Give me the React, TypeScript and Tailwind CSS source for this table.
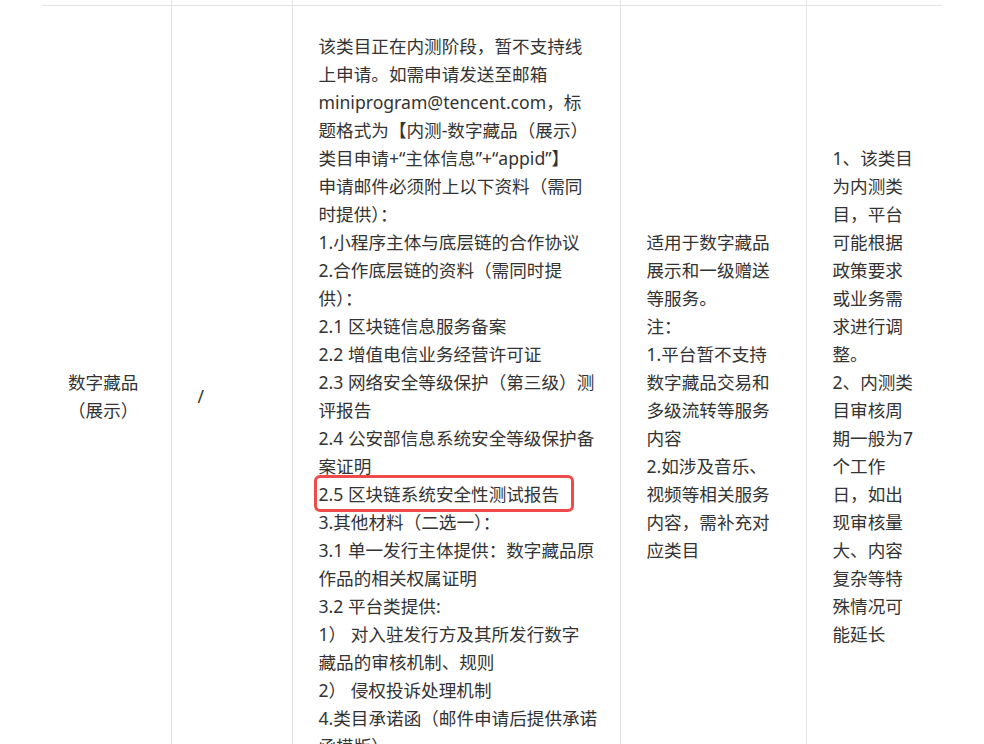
const requirements = [
  '该类目正在内测阶段，暂不支持线',
  '上申请。如需申请发送至邮箱',
  'miniprogram@tencent.com，标',
  '题格式为【内测-数字藏品（展示）',
  '类目申请+“主体信息”+“appid”】',
  '申请邮件必须附上以下资料（需同',
  '时提供）：',
  '1.小程序主体与底层链的合作协议',
  '2.合作底层链的资料（需同时提',
  '供）：',
  '2.1 区块链信息服务备案',
  '2.2 增值电信业务经营许可证',
  '2.3 网络安全等级保护（第三级）测',
  '评报告',
  '2.4 公安部信息系统安全等级保护备',
  '案证明',
  '2.5 区块链系统安全性测试报告',
  '3.其他材料（二选一）：',
  '3.1 单一发行主体提供：数字藏品原',
  '作品的相关权属证明',
  '3.2 平台类提供:',
  '1） 对入驻发行方及其所发行数字',
  '藏品的审核机制、规则',
  '2） 侵权投诉处理机制',
  '4.类目承诺函（邮件申请后提供承诺',
  '函模版）',
]

const scope = [
  '适用于数字藏品',
  '展示和一级赠送',
  '等服务。',
  '注：',
  '1.平台暂不支持',
  '数字藏品交易和',
  '多级流转等服务',
  '内容',
  '2.如涉及音乐、',
  '视频等相关服务',
  '内容，需补充对',
  '应类目',
]

const notes = [
  '1、该类目',
  '为内测类',
  '目，平台',
  '可能根据',
  '政策要求',
  '或业务需',
  '求进行调',
  '整。',
  '2、内测类',
  '目审核周',
  '期一般为7',
  '个工作',
  '日，如出',
  '现审核量',
  '大、内容',
  '复杂等特',
  '殊情况可',
  '能延长',
]

const HIGHLIGHT = '2.5 区块链系统安全性测试报告'

function Lines({ lines }: { lines: string[] }) {
  return (
    <>
      {lines.map((l, i) => (
        <div key={i} className="whitespace-nowrap">
          {l === HIGHLIGHT ? (
            <span className="relative inline-block">
              {l}
              <span className="absolute -left-[5px] -right-[15px] -top-[5px] -bottom-[4px] rounded-[6px] border-[3px] border-[#ef4b4b]" />
            </span>
          ) : (
            l
          )}
        </div>
      ))}
    </>
  )
}

export default function App() {
  const cell = 'border-r border-[#e3e3e3] px-[26px] py-[26px] align-middle text-left'
  return (
    <div
      className="min-h-screen bg-white text-[17.6px] leading-[28px] text-[#333333]"
      style={{ fontFamily: '"Noto Sans", "Noto Sans CJK SC", sans-serif' }}
    >
      <table className="mx-auto w-[900px] table-fixed border-collapse">
        <colgroup>
          <col className="w-[129px]" />
          <col className="w-[121px]" />
          <col className="w-[328px]" />
          <col className="w-[186px]" />
          <col className="w-[136px]" />
        </colgroup>
        <tbody>
          <tr className="h-[5px]">
            <td className="border-r border-[#e3e3e3] p-0" />
            <td className="border-r border-[#e3e3e3] p-0" />
            <td className="border-r border-[#e3e3e3] p-0" />
            <td className="border-r border-[#e3e3e3] p-0" />
            <td className="p-0" />
          </tr>
          <tr className="border-t border-[#e3e3e3]">
            <td className={cell}>
              <Lines lines={['数字藏品', '（展示）']} />
            </td>
            <td className={cell}>/</td>
            <td className={cell}>
              <Lines lines={requirements} />
            </td>
            <td className={cell}>
              <Lines lines={scope} />
            </td>
            <td className="px-[26px] py-[26px] align-middle text-left">
              <Lines lines={notes} />
            </td>
          </tr>
        </tbody>
      </table>
    </div>
  )
}
